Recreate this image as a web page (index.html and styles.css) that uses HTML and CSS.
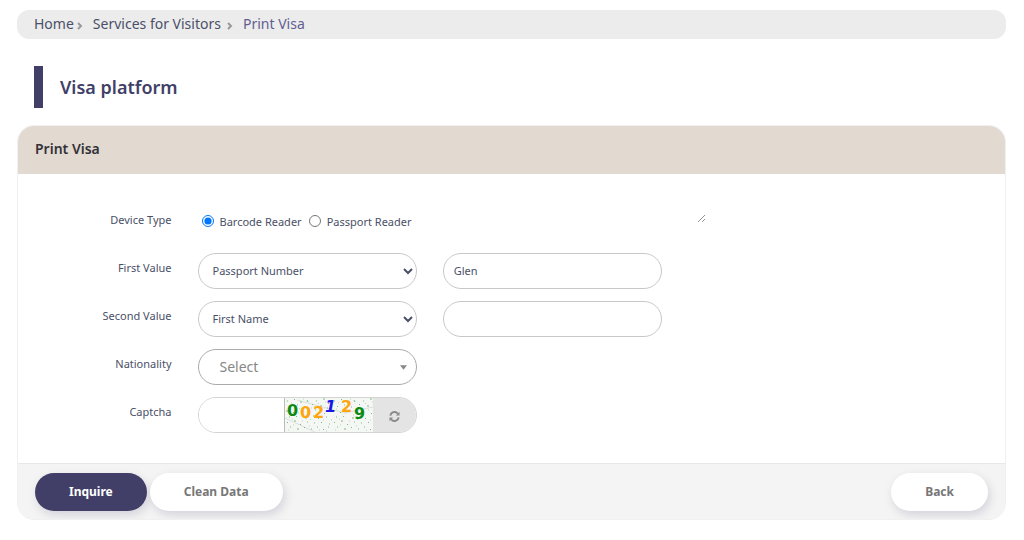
FILE: index.html
```html
<!DOCTYPE html>
<html lang="en">
<head>
    <meta charset="UTF-8">
    <meta name="viewport" content="width=device-width, initial-scale=1.0">
    <title>Visa platform</title>
    <link rel="stylesheet" href="styles.css">
</head>
<body>
    <nav class="breadcrumb">
        <a href="#">Home</a>
        <svg class="sep" viewBox="0 0 6 8"><path d="M1 1l3 3-3 3"/></svg>
        <a href="#" class="section">Services for Visitors</a>
        <svg class="sep wide" viewBox="0 0 6 8"><path d="M1 1l3 3-3 3"/></svg>
        <a href="#" class="current">Print Visa</a>
    </nav>

    <h1>Visa platform</h1>

    <form class="card">
        <h2 class="card-header">Print Visa</h2>

        <div class="card-body">
            <div class="row">
                <span class="label" id="deviceLabel">Device Type</span>
                <div class="cell radios" role="radiogroup" aria-labelledby="deviceLabel">
                    <input type="radio" name="device" id="barcode" checked>
                    <label for="barcode">Barcode Reader</label>
                    <input type="radio" name="device" id="passport">
                    <label for="passport">Passport Reader</label>
                </div>
                <div class="cell notes">
                    <textarea class="scan-data" aria-label="Scanned data"></textarea>
                </div>
            </div>

            <div class="row">
                <label class="label" for="firstType">First Value</label>
                <div class="cell">
                    <select class="control" id="firstType">
                        <option>Passport Number</option>
                        <option>Visa Number</option>
                    </select>
                </div>
                <div class="cell">
                    <input type="text" class="control" id="firstValue" aria-label="First Value" value="Glen">
                </div>
            </div>

            <div class="row">
                <label class="label" for="secondType">Second Value</label>
                <div class="cell">
                    <select class="control" id="secondType">
                        <option>First Name</option>
                        <option>Last Name</option>
                    </select>
                </div>
                <div class="cell">
                    <input type="text" class="control" id="secondValue" aria-label="Second Value">
                </div>
            </div>

            <div class="row">
                <label class="label" for="nationality">Nationality</label>
                <div class="cell">
                    <div class="picker">
                        <select class="control" id="nationality">
                            <option>Select</option>
                        </select>
                        <svg class="caret" viewBox="0 0 8 5"><path d="M0 0h8L4 5z"/></svg>
                    </div>
                </div>
            </div>

            <div class="row">
                <label class="label" for="captcha">Captcha</label>
                <div class="cell">
                    <div class="captcha">
                        <input type="text" id="captcha">
                        <svg class="captcha-image" viewBox="0 0 88 34" role="img" aria-label="Captcha code">
                            <defs>
                                <pattern id="noise" width="47" height="34" patternUnits="userSpaceOnUse">
                                    <path stroke="#79bd86" stroke-width="1" d="M2 3h1M9 1l1 1M15 4h2M22 2l1 2M31 3h1M38 1h2M44 5l-1 1M5 8l1 1M12 7h1M19 9h1M27 6l1 1M35 8h2M42 10h1M1 13h2M8 15l1-1M16 13h1M24 14l1 1M30 12h1M39 15l1 1M45 13h1M4 19h1M11 18l1 1M20 20h2M28 18h1M33 21l1-1M41 19h1M2 24l1 1M9 23h2M15 26l1 1M22 24h1M29 25h1M36 24l1 1M44 26h1M5 29h1M12 31h2M19 29l1 1M26 31h1M32 29h1M38 31l1 1M43 29h1"/>
                                    <path stroke="#b5d8bb" stroke-width="1" d="M6 5h1M18 1h1M26 10h1M33 5l1 1M4 11h1M14 10l1 1M21 17h1M36 12h1M7 21h1M17 23h1M25 21l1 1M38 22h1M3 32h1M8 27h1M24 28h1M34 32h1M41 33h1M46 22h1M13 15h1M40 4h1"/>
                                </pattern>
                            </defs>
                            <rect width="88" height="34" fill="#f4f7f4"/>
                            <path d="M0 20L30 34M12 2L60 15L88 9" fill="none" stroke="#dcdfdc"/>
                            <rect width="88" height="34" fill="url(#noise)"/>
                            <g class="digits">
                                <text x="2" y="18" fill="#0b8a12">0</text>
                                <text x="15" y="20" fill="#ffa510">0</text>
                                <text x="28" y="20" fill="#ffa510">2</text>
                                <text x="40" y="14" fill="#1515e6" font-style="italic">1</text>
                                <text x="56" y="14" fill="#ffa510">2</text>
                                <text x="69" y="21" fill="#0b8a12">9</text>
                            </g>
                        </svg>
                        <button type="button" class="refresh" aria-label="Refresh captcha">
                            <svg viewBox="0 0 12 12">
                                <path d="M1.5 5A4.6 4.6 0 0 1 9.6 2.8M10.5 7A4.6 4.6 0 0 1 2.4 9.2"/>
                                <path class="tip" d="M11.5 .8v4h-4zM.5 11.2v-4h4z"/>
                            </svg>
                        </button>
                    </div>
                </div>
            </div>
        </div>

        <div class="card-footer">
            <button type="button" class="btn btn-primary">Inquire</button>
            <button type="reset" class="btn">Clean Data</button>
            <button type="button" class="btn btn-back">Back</button>
        </div>
    </form>
</body>
</html>
```

FILE: styles.css
```css
* {
    box-sizing: border-box;
}
body {
    margin: 0;
    padding: 10px 18px 20px 17px;
    background: white;
    color: #4a5068;
    font-family: "Noto Sans", sans-serif;
    font-size: 11px;
}
input, select, button, textarea {
    font-family: inherit;
    font-size: inherit;
    color: inherit;
}
.breadcrumb {
    display: flex;
    align-items: center;
    height: 29px;
    padding: 0 17px;
    border-radius: 12px;
    background: #ececec;
    font-size: 14px;
    line-height: 28px;
}
.breadcrumb a {
    margin-bottom: 2px;
    color: #4a5068;
    text-decoration: none;
}
.breadcrumb .current {
    color: #625e91;
}
.sep {
    width: 6px;
    height: 8px;
    margin: 2px 10px 0 3px;
    fill: none;
    stroke: #999;
    stroke-width: 2;
}
.sep.wide {
    margin-left: 6px;
}
h1 {
    margin: 27px 17px 17px;
    padding-left: 17px;
    border-left: 9px solid #413f67;
    color: #413f67;
    font-size: 18px;
    font-weight: 600;
    line-height: 42px;
}
.card {
    border: 1px solid #f0f0f0;
    border-radius: 17px;
    overflow: hidden;
}
.card-header {
    margin: 0;
    padding: 0 17px 2px;
    background: #e2d9d0;
    color: #333238;
    font-size: 14px;
    font-weight: 600;
    line-height: 46px;
}
.card-body {
    display: grid;
    gap: 12px;
    padding: 31px 3px 30px;
}
.row {
    display: grid;
    grid-template-columns: 2fr 3fr 3fr 4fr;
    min-height: 36px;
}
.label {
    padding: 7px 13px 0;
    line-height: 16px;
    text-align: right;
}
.cell {
    min-width: 0;
    padding: 0 13px;
}
.control {
    display: block;
    width: 100%;
    height: 36px;
    padding: 0 10px 2px;
    border: 1px solid #c8c8c8;
    border-radius: 18px;
    background: white;
}
select.control {
    padding-right: 0;
}
.radios {
    display: flex;
    align-items: center;
    padding-bottom: 4px;
    white-space: nowrap;
}
.radios input {
    flex: none;
    width: 12px;
    height: 12px;
    margin: 0 6px 0 4px;
}
.radios label {
    margin-right: 3px;
}
.notes {
    grid-column: 4;
}
.scan-data {
    display: block;
    width: 18px;
    height: 18px;
    padding: 0;
    border: none;
    background: transparent;
    opacity: 0.7;
    overflow: hidden;
}
.picker {
    position: relative;
}
.picker .control {
    padding-left: 21px;
    border-color: #aaa;
    color: #888;
    font-size: 14px;
    appearance: none;
}
.caret {
    position: absolute;
    top: 16px;
    right: 10px;
    width: 7px;
    height: 5px;
    fill: #888;
    pointer-events: none;
}
.captcha {
    display: flex;
    height: 36px;
    border: 1px solid #d4d4d4;
    border-radius: 18px;
    overflow: hidden;
}
.captcha input {
    flex: 1;
    min-width: 0;
    padding: 0 10px;
    border: none;
}
.captcha-image {
    flex: none;
    width: 89px;
    height: 34px;
    border-left: 1px solid #bbb;
}
.digits {
    font-family: "DejaVu Sans", sans-serif;
    font-size: 16px;
    font-weight: bold;
}
.refresh {
    width: 43px;
    padding: 0;
    border: none;
    background: #e4e4e4;
}
.refresh svg {
    width: 11px;
    height: 11px;
    vertical-align: middle;
    fill: none;
    stroke: #888;
    stroke-width: 2;
}
.refresh .tip {
    fill: #888;
    stroke: none;
}
.card-footer {
    display: flex;
    gap: 3px;
    padding: 9px 17px 8px;
    border-top: 1px solid #e8e8e8;
    background: #f4f4f4;
}
.btn {
    height: 38px;
    padding: 0 34px 2px;
    border: none;
    border-radius: 19px;
    background: white;
    box-shadow: 2px 4px 10px rgba(65, 63, 103, 0.18);
    color: #777;
    font-size: 12px;
    font-weight: bold;
    cursor: pointer;
}
.btn-primary {
    background: #413f67;
    color: white;
}
.btn-back {
    margin-left: auto;
}
```
